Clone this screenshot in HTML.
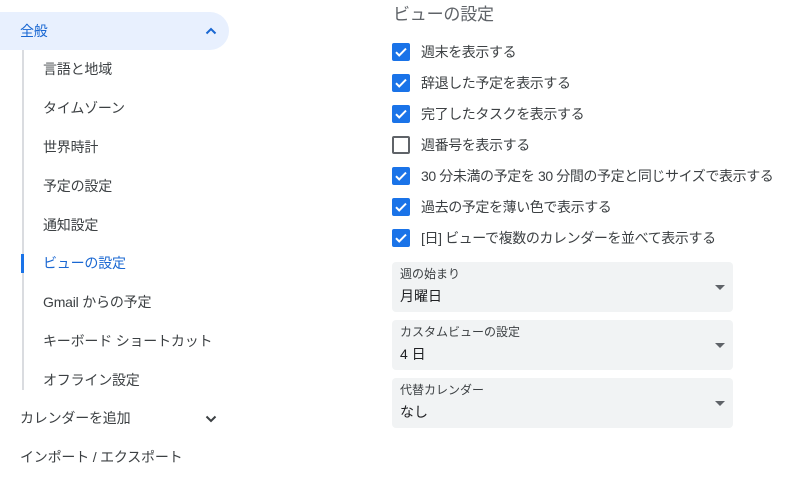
<!DOCTYPE html>
<html><head><meta charset="utf-8"><style>
*{margin:0;padding:0;box-sizing:border-box}
body{width:800px;height:489px;background:#fff;position:relative;overflow:hidden;font-family:"Liberation Sans","Noto Sans CJK JP",sans-serif;color:#3c4043}
.a{position:absolute;white-space:nowrap;line-height:20px;letter-spacing:-0.2px}
.nav{font-size:14px;left:43px}
.cb{position:absolute;left:392px;width:18px;height:18px;border-radius:2px;background:#1a73e8}
.cb.off{background:#fff;border:2px solid #5f6368}
.cb svg{position:absolute;left:0;top:0}
.ct{font-size:14px;left:421px;color:#3c4043;letter-spacing:-0.4px}
.sel{position:absolute;left:392px;width:341px;height:50px;background:#f1f3f4;border-radius:4px}
.sel .l{position:absolute;left:8px;top:4px;font-size:12px;color:#3c4043;line-height:16px}
.sel .v{position:absolute;left:8px;top:24px;font-size:14px;color:#202124;line-height:20px}
.sel .ar{position:absolute;left:323px;top:23px;width:0;height:0;border-left:5px solid transparent;border-right:5px solid transparent;border-top:5px solid #5f6368}
</style></head><body>
<div style="position:absolute;left:0;top:12px;width:229px;height:38px;background:#e8f0fe;border-radius:0 19px 19px 0"></div>
<div class="a" style="left:20px;top:21px;font-size:14px;color:#1967d2">全般</div>
<svg style="position:absolute;left:203px;top:23px" width="16" height="16" viewBox="0 0 16 16"><path d="M3.5 10.5L8 6l4.5 4.5" fill="none" stroke="#1967d2" stroke-width="2"/></svg>
<div style="position:absolute;left:22px;top:50px;width:2px;height:340px;background:#dadce0"></div>
<div style="position:absolute;left:21px;top:254px;width:3px;height:19px;background:#1a73e8"></div>
<div class="a nav" style="top:59px">言語と地域</div>
<div class="a nav" style="top:98px">タイムゾーン</div>
<div class="a nav" style="top:137px">世界時計</div>
<div class="a nav" style="top:176px">予定の設定</div>
<div class="a nav" style="top:215px">通知設定</div>
<div class="a nav" style="top:253px;color:#1967d2">ビューの設定</div>
<div class="a nav" style="top:292px">Gmail からの予定</div>
<div class="a nav" style="top:331px">キーボード ショートカット</div>
<div class="a nav" style="top:370px">オフライン設定</div>
<div class="a" style="left:20px;top:408px;font-size:14px">カレンダーを追加</div>
<svg style="position:absolute;left:203px;top:411px" width="16" height="16" viewBox="0 0 16 16"><path d="M3.5 5.5L8 10l4.5-4.5" fill="none" stroke="#3c4043" stroke-width="2"/></svg>
<div class="a" style="left:20px;top:447px;font-size:14px">インポート / エクスポート</div>

<div class="a" style="left:393px;top:4px;font-size:17px;line-height:22px;color:#5f6368">ビューの設定</div>

<div class="cb" style="top:43px"><svg width="18" height="18"><path d="M4 9.2l3.2 3.2L14 5.6" fill="none" stroke="#fff" stroke-width="2"/></svg></div>
<div class="a ct" style="top:42px">週末を表示する</div>
<div class="cb" style="top:74px"><svg width="18" height="18"><path d="M4 9.2l3.2 3.2L14 5.6" fill="none" stroke="#fff" stroke-width="2"/></svg></div>
<div class="a ct" style="top:73px">辞退した予定を表示する</div>
<div class="cb" style="top:105px"><svg width="18" height="18"><path d="M4 9.2l3.2 3.2L14 5.6" fill="none" stroke="#fff" stroke-width="2"/></svg></div>
<div class="a ct" style="top:104px">完了したタスクを表示する</div>
<div class="cb off" style="top:136px"></div>
<div class="a ct" style="top:135px">週番号を表示する</div>
<div class="cb" style="top:167px"><svg width="18" height="18"><path d="M4 9.2l3.2 3.2L14 5.6" fill="none" stroke="#fff" stroke-width="2"/></svg></div>
<div class="a ct" style="top:166px">30 分未満の予定を 30 分間の予定と同じサイズで表示する</div>
<div class="cb" style="top:198px"><svg width="18" height="18"><path d="M4 9.2l3.2 3.2L14 5.6" fill="none" stroke="#fff" stroke-width="2"/></svg></div>
<div class="a ct" style="top:197px">過去の予定を薄い色で表示する</div>
<div class="cb" style="top:229px"><svg width="18" height="18"><path d="M4 9.2l3.2 3.2L14 5.6" fill="none" stroke="#fff" stroke-width="2"/></svg></div>
<div class="a ct" style="top:228px">[日] ビューで複数のカレンダーを並べて表示する</div>

<div class="sel" style="top:262px"><div class="l">週の始まり</div><div class="v">月曜日</div><div class="ar"></div></div>
<div class="sel" style="top:320px"><div class="l">カスタムビューの設定</div><div class="v">4 日</div><div class="ar"></div></div>
<div class="sel" style="top:378px"><div class="l">代替カレンダー</div><div class="v">なし</div><div class="ar"></div></div>
</body></html>
